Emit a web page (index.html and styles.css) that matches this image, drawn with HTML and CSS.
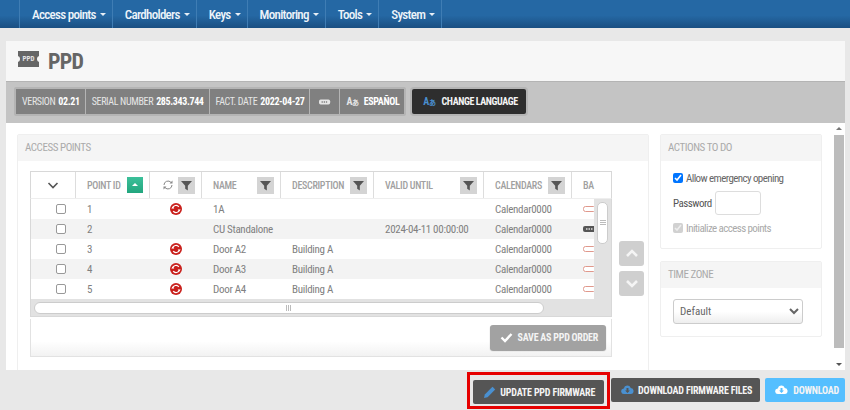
FILE: index.html
```html
<!DOCTYPE html>
<html lang="en">
<head>
  <meta charset="UTF-8">
  <title>PPD</title>
  <link rel="stylesheet" href="styles.css">
</head>
<body>
  <svg class="svg-defs" width="0" height="0">
    <symbol id="i-sync" viewBox="0 0 12 12">
      <circle cx="6" cy="6" r="6" fill="#c9201c"/>
      <path d="M2.600 5.200A3.500 3.500 0 0 1 8.800 3.800M9.400 6.800A3.500 3.500 0 0 1 3.200 8.200" fill="none" stroke="#fff" stroke-width="1.200"/>
      <path d="M1.300 5.600h3l-1.500-2zM10.700 6.400h-3l1.500 2z" fill="#fff"/>
    </symbol>
    <symbol id="i-filter" viewBox="0 0 10 10">
      <path d="M0 1h10L6.200 5.200V9.500L3.800 8V5.200z" fill="#555"/>
    </symbol>
    <symbol id="i-battery" viewBox="0 0 14 6">
      <rect x=".5" y=".5" width="12" height="5" rx="2" fill="#fff" stroke="#e0988c"/>
    </symbol>
    <symbol id="i-battery-dark" viewBox="0 0 14 6">
      <rect x="0" y="0" width="13" height="6" rx="2" fill="#555"/>
      <path d="M3 3h7" stroke="#ddd" stroke-width="1.500" stroke-dasharray="1.500 1"/>
    </symbol>
    <symbol id="i-battery-light" viewBox="0 0 14 6">
      <rect x="0" y="0" width="13" height="6" rx="2" fill="#e6e6e6"/>
      <path d="M3 3h7" stroke="#808080" stroke-width="1.500" stroke-dasharray="1.500 1"/>
    </symbol>
    <symbol id="i-cloud" viewBox="0 0 16 12">
      <path d="M4 11a3.500 3.500 0 0 1-.6-7A4.500 4.500 0 0 1 12 3.500 3.800 3.800 0 0 1 12.500 11z" fill="currentColor"/>
      <path d="M6.800 3.500h2.400v3h1.800L8 9.600 5 6.500h1.800z" fill="var(--arrow, #fff)"/>
    </symbol>
  </svg>

  <nav class="topbar">
    <a class="menu-item">Access points <span class="caret"></span></a>
    <a class="menu-item">Cardholders <span class="caret"></span></a>
    <a class="menu-item">Keys <span class="caret"></span></a>
    <a class="menu-item">Monitoring <span class="caret"></span></a>
    <a class="menu-item">Tools <span class="caret"></span></a>
    <a class="menu-item">System <span class="caret"></span></a>
  </nav>

  <main class="page">
    <header class="title-bar">
      <span class="ppd-logo"><span>PPD</span></span>
      <h1>PPD</h1>
    </header>

    <div class="info-bar">
      <div class="info-group">
        <span class="info-cell">VERSION <b>02.21</b></span>
        <span class="info-cell">SERIAL NUMBER <b>285.343.744</b></span>
        <span class="info-cell">FACT. DATE <b>2022-04-27</b></span>
        <span class="info-cell"><svg class="info-batt"><use href="#i-battery-light"/></svg></span>
        <span class="info-cell info-lang"><span class="lang-icon">A<small>あ</small></span> <b>ESPAÑOL</b></span>
      </div>
      <button class="lang-btn"><span class="lang-icon lang-blue">A<small>あ</small></span> CHANGE LANGUAGE</button>
    </div>

    <div class="content">
      <div class="content-inner">
        <section class="panel panel-points">
          <h2 class="panel-head">ACCESS POINTS</h2>
          <div class="points-body">
            <div class="grid-box">
              <div class="grid-head grid-cols">
                <div class="hcell hcell-check"><svg width="12" height="7" viewBox="0 0 12 7"><path d="M1.500 1L6 5.500 10.500 1" fill="none" stroke="#555" stroke-width="1.600"/></svg></div>
                <div class="hcell"><span>POINT ID</span><span class="sort-btn"></span></div>
                <div class="hcell hcell-sync">
                  <svg width="12" height="12" viewBox="0 0 12 12"><path d="M2 6a4 4 0 0 1 7-2.600M10 6a4 4 0 0 1-7 2.600" fill="none" stroke="#888"/><path d="M10.500 1.500v3h-3zM1.500 10.500v-3h3z" fill="#888"/></svg>
                  <span class="filter-btn"><svg><use href="#i-filter"/></svg></span>
                </div>
                <div class="hcell"><span>NAME</span><span class="filter-btn"><svg><use href="#i-filter"/></svg></span></div>
                <div class="hcell"><span>DESCRIPTION</span><span class="filter-btn"><svg><use href="#i-filter"/></svg></span></div>
                <div class="hcell"><span>VALID UNTIL</span><span class="filter-btn"><svg><use href="#i-filter"/></svg></span></div>
                <div class="hcell"><span>CALENDARS</span><span class="filter-btn"><svg><use href="#i-filter"/></svg></span></div>
                <div class="hcell hcell-last"><span>BA</span></div>
              </div>

              <div class="grid-rows">
                <div class="row grid-cols">
                  <div class="cell cell-check"><span class="tick"></span></div>
                  <div class="cell cell-id">1</div>
                  <div class="cell cell-sync"><svg><use href="#i-sync"/></svg></div>
                  <div class="cell">1A</div>
                  <div class="cell"></div>
                  <div class="cell"></div>
                  <div class="cell">Calendar0000</div>
                  <div class="cell cell-batt"><svg><use href="#i-battery"/></svg></div>
                </div>
                <div class="row grid-cols">
                  <div class="cell cell-check"><span class="tick"></span></div>
                  <div class="cell cell-id">2</div>
                  <div class="cell cell-sync"></div>
                  <div class="cell">CU Standalone</div>
                  <div class="cell"></div>
                  <div class="cell">2024-04-11 00:00:00</div>
                  <div class="cell">Calendar0000</div>
                  <div class="cell cell-batt"><svg><use href="#i-battery-dark"/></svg></div>
                </div>
                <div class="row grid-cols">
                  <div class="cell cell-check"><span class="tick"></span></div>
                  <div class="cell cell-id">3</div>
                  <div class="cell cell-sync"><svg><use href="#i-sync"/></svg></div>
                  <div class="cell">Door A2</div>
                  <div class="cell">Building A</div>
                  <div class="cell"></div>
                  <div class="cell">Calendar0000</div>
                  <div class="cell cell-batt"><svg><use href="#i-battery"/></svg></div>
                </div>
                <div class="row grid-cols">
                  <div class="cell cell-check"><span class="tick"></span></div>
                  <div class="cell cell-id">4</div>
                  <div class="cell cell-sync"><svg><use href="#i-sync"/></svg></div>
                  <div class="cell">Door A3</div>
                  <div class="cell">Building A</div>
                  <div class="cell"></div>
                  <div class="cell">Calendar0000</div>
                  <div class="cell cell-batt"><svg><use href="#i-battery"/></svg></div>
                </div>
                <div class="row grid-cols">
                  <div class="cell cell-check"><span class="tick"></span></div>
                  <div class="cell cell-id">5</div>
                  <div class="cell cell-sync"><svg><use href="#i-sync"/></svg></div>
                  <div class="cell">Door A4</div>
                  <div class="cell">Building A</div>
                  <div class="cell"></div>
                  <div class="cell">Calendar0000</div>
                  <div class="cell cell-batt"><svg><use href="#i-battery"/></svg></div>
                </div>
                <div class="vscroll"><span class="vthumb"></span></div>
              </div>

              <div class="hscroll"><span class="hthumb"></span></div>

              <div class="grid-foot">
                <button class="save-btn">
                  <svg width="13" height="11" viewBox="0 0 13 11"><path d="M1.500 5.500L5 9l6.500-7" fill="none" stroke="#fff" stroke-width="2.400"/></svg>
                  SAVE AS PPD ORDER
                </button>
              </div>
            </div>
            <div class="move-btns">
              <button class="move-btn"><svg width="14" height="9" viewBox="0 0 14 9"><path d="M2 7l5-5 5 5" fill="none" stroke="#f4f4f4" stroke-width="2.600"/></svg></button>
              <button class="move-btn"><svg width="14" height="9" viewBox="0 0 14 9"><path d="M2 2l5 5 5-5" fill="none" stroke="#f4f4f4" stroke-width="2.600"/></svg></button>
            </div>
          </div>
        </section>

        <aside class="side">
          <section class="panel">
            <h2 class="panel-head">ACTIONS TO DO</h2>
            <div class="actions-body">
              <label class="check-line"><input type="checkbox" checked> Allow emergency opening</label>
              <label class="pass-line">Password <input type="password" class="pass-input"></label>
              <label class="check-line check-off"><input type="checkbox" checked disabled> Initialize access points</label>
            </div>
          </section>
          <section class="panel">
            <h2 class="panel-head">TIME ZONE</h2>
            <div class="zone-body">
              <select class="zone-select"><option>Default</option></select>
            </div>
          </section>
        </aside>
      </div>

      <div class="page-scroll">
        <span class="arrow-up"></span>
        <span class="page-thumb"></span>
        <span class="arrow-down"></span>
      </div>
    </div>

    <footer class="actions">
      <span class="highlight">
        <button class="btn btn-dark btn-update">
          <svg width="14" height="14" viewBox="0 0 14 14"><path d="M1 13l.8-3.500L9.500 1.800l2.700 2.700-7.700 7.700z" fill="#4a90d0"/></svg>
          UPDATE PPD FIRMWARE
        </button>
      </span>
      <button class="btn btn-dark btn-files">
        <svg class="cloud cloud-blue"><use href="#i-cloud"/></svg>
        DOWNLOAD FIRMWARE FILES
      </button>
      <button class="btn btn-blue">
        <svg class="cloud cloud-white"><use href="#i-cloud"/></svg>
        DOWNLOAD
      </button>
    </footer>
  </main>
</body>
</html>
```

FILE: styles.css
```css
* { box-sizing: border-box; }
html, body { height: 100%; }
body {
  margin: 0;
  background-color: #e8e8e8;
  color: #777;
  font-family: Roboto, "Liberation Sans", sans-serif;
  font-stretch: 75%;
  font-size: 12px;
  overflow: hidden;
}
.svg-defs { position: absolute; }
h1, h2 { margin: 0; }
button { font-family: inherit; font-stretch: inherit; border: none; cursor: pointer; }
select { font-stretch: inherit; }

/* top menu */
.topbar {
  display: flex;
  height: 28px;
  padding-left: 19px;
  background: linear-gradient(#2568a4 0%, #2568a4 55%, #1a4f82 100%);
}
.menu-item {
  display: flex;
  align-items: center;
  gap: 4px;
  padding: 0 6px 0 12px;
  border-left: 1px solid #3f7db4;
  color: #eef4fa;
  font-size: 13px;
  font-weight: 500;
  letter-spacing: -.7px;
  white-space: nowrap;
}
.menu-item:last-child { border-right: 1px solid #3f7db4; }
.caret {
  border: 3px solid transparent;
  border-top-color: #e8eff6;
  border-bottom-width: 0;
}

.page { padding: 13px 5px 0 6px; }

/* title */
.title-bar {
  display: flex;
  align-items: center;
  gap: 9px;
  height: 40px;
  padding-left: 12px;
  background-color: #f7f7f7;
}
.title-bar h1 {
  color: #666;
  font-size: 22px;
  font-weight: 700;
  letter-spacing: -.8px;
}
.ppd-logo {
  position: relative;
  display: flex;
  align-items: center;
  justify-content: center;
  width: 21px;
  height: 16px;
  margin-top: -4px;
  background-color: #666;
}
.ppd-logo::before,
.ppd-logo::after {
  content: "";
  position: absolute;
  top: 5px;
  width: 6px;
  height: 6px;
  background-color: #f7f7f7;
  border-radius: 50%;
}
.ppd-logo::before { left: -4px; }
.ppd-logo::after { right: -4px; }
.ppd-logo span {
  color: #e4e4e4;
  font-size: 7px;
  font-weight: bold;
  line-height: 1;
}

/* grey info strip */
.info-bar {
  display: flex;
  align-items: flex-start;
  gap: 6px;
  height: 42px;
  padding: 7px 0 0 8px;
  background-color: #c4c4c4;
  border-top: 1px solid #b4b4b4;
}
.info-group {
  display: flex;
  gap: 1px;
  padding: 2px;
  margin-top: -2px;
  background-color: #b4b4b4;
  border-radius: 2px;
}
.info-cell {
  display: flex;
  align-items: center;
  gap: 3px;
  height: 25px;
  padding: 0 5px 0 6px;
  background-color: #808080;
  color: #e6e6e6;
  font-size: 10px;
  letter-spacing: -.35px;
  white-space: nowrap;
}
.info-cell b { color: #fff; }
.info-lang { gap: 5px; padding: 0 5px 0 6px; }
.info-batt { width: 12px; height: 6px; margin: 0 3px; }
.lang-icon { font-size: 10px; font-weight: bold; color: #e6e6e6; }
.lang-icon small { font-size: 7px; font-family: "Noto Sans CJK JP", sans-serif; }
.lang-blue { color: #4a90d0; }
.lang-btn {
  display: flex;
  align-items: center;
  gap: 6px;
  height: 25px;
  padding: 0 8px 0 11px;
  background-color: #2e2e2e;
  color: #f4f4f4;
  font-size: 10px;
  font-weight: bold;
  letter-spacing: -.4px;
  border-radius: 2px;
  box-shadow: 0 0 0 2px #b4b4b4;
}

/* white scrolling body */
.content {
  display: flex;
  height: 247px;
  background-color: #fff;
  overflow: hidden;
}
.content-inner {
  display: flex;
  flex: 1;
  gap: 11px;
  padding: 11px 0 0 11px;
}
.panel {
  background-color: #fff;
  border: 1px solid #efefef;
  border-radius: 2px;
}
.panel-head {
  height: 26px;
  padding: 0 7px;
  background-color: #f5f5f5;
  color: #aaa;
  font-size: 11px;
  font-weight: normal;
  letter-spacing: -.45px;
  line-height: 25px;
}
.panel-points { width: 632px; height: 240px; }
.points-body {
  display: flex;
  gap: 7px;
  padding: 10px 0 0 12px;
}

/* access points table */
.grid-box { width: 582px; }
.grid-cols {
  display: grid;
  grid-template-columns: 45px 74px 52px 79px 93px 110px 88px 39px;
}
.grid-head {
  height: 28px;
  border: 1px solid #d8d8d8;
  border-bottom: 1px solid #eee;
}
.hcell {
  display: flex;
  align-items: center;
  justify-content: space-between;
  padding: 0 6px 0 11px;
  border-right: 1px solid #ddd;
  color: #a0a0a0;
  font-size: 10px;
  font-weight: 500;
  letter-spacing: -.3px;
  white-space: nowrap;
}
.hcell-check { justify-content: center; padding: 0; }
.hcell-sync { padding: 0 6px 0 12px; }
.hcell-last { border-right: none; }
.sort-btn {
  position: relative;
  width: 16px;
  height: 16px;
  background: linear-gradient(#3cc09a, #22a67e);
}
.sort-btn::after {
  content: "";
  position: absolute;
  left: 5px;
  top: 6px;
  border: 3px solid transparent;
  border-bottom-color: #fff;
  border-top-width: 0;
}
.filter-btn {
  display: flex;
  align-items: center;
  justify-content: center;
  width: 17px;
  height: 17px;
  background-color: #d4d4d4;
}
.filter-btn svg { width: 11px; height: 11px; }
.grid-rows {
  position: relative;
  overflow: hidden;
  border-right: 1px solid #d8d8d8;
  border-left: 1px solid #d8d8d8;
}
.row { height: 20px; }
.row:nth-child(even) { background-color: #f3f3f3; }
.cell {
  display: flex;
  align-items: center;
  padding-left: 11px;
  color: #808080;
  font-size: 11px;
  letter-spacing: -.3px;
  white-space: nowrap;
}
.cell-check { justify-content: center; padding: 0; }
.cell-sync { justify-content: center; padding: 0; }
.cell-sync svg { width: 12px; height: 12px; }
.cell-batt svg { width: 14px; height: 6px; flex: none; }
.tick {
  width: 10px;
  height: 10px;
  margin-left: 15px;
  background-color: #fff;
  border: 1px solid #999;
  border-radius: 2px;
}
.vscroll {
  position: absolute;
  top: 0;
  right: 0;
  bottom: 0;
  width: 17px;
  padding: 3px 3px 0;
  background-color: #e2e2e2;
}
.vthumb {
  display: block;
  height: 42px;
  background: repeating-linear-gradient(#bbb 0 1px, transparent 1px 2px) center / 6px 6px no-repeat, #fff;
  border: 1px solid #ccc;
  border-radius: 5px;
}
.hscroll {
  height: 18px;
  padding: 3px 67px 3px 3px;
  background-color: #e2e2e2;
  border: 1px solid #d8d8d8;
  border-top: none;
}
.hthumb {
  display: block;
  height: 12px;
  background: repeating-linear-gradient(90deg, #bbb 0 1px, transparent 1px 2px) center / 6px 6px no-repeat, #fff;
  border: 1px solid #ccc;
  border-radius: 6px;
}
.grid-foot {
  display: flex;
  justify-content: flex-end;
  height: 38px;
  margin-top: 2px;
  padding: 6px 5px 0 0;
  background: linear-gradient(#fff 60%, #f2f2f2);
  border: 1px solid #e2e2e2;
  border-top: none;
}
.save-btn {
  display: flex;
  align-items: center;
  gap: 5px;
  height: 25px;
  padding: 0 8px 0 10px;
  background-color: #a2a2a2;
  color: #f4f4f4;
  font-size: 10px;
  font-weight: bold;
  letter-spacing: -.25px;
  border-radius: 3px;
  box-shadow: 0 1px 1px #999;
}
.move-btns {
  display: flex;
  flex-direction: column;
  gap: 5px;
  padding-top: 70px;
}
.move-btn {
  display: flex;
  align-items: center;
  justify-content: center;
  width: 25px;
  height: 25px;
  padding: 0;
  background-color: #cfcfcf;
  border-radius: 3px;
}

/* right column */
.side {
  display: flex;
  flex-direction: column;
  gap: 12px;
  width: 162px;
}
.actions-body { padding: 11px 12px 0; height: 87px; }
.check-line {
  display: flex;
  align-items: center;
  gap: 3px;
  height: 12px;
  color: #666;
  font-size: 11px;
  letter-spacing: -.6px;
  white-space: nowrap;
}
.check-line input { width: 10px; height: 10px; margin: 0; flex: none; }
.check-off { color: #aaa; }
.pass-line {
  display: flex;
  align-items: center;
  gap: 3px;
  margin: 7px 0;
  color: #555;
  font-size: 11px;
  letter-spacing: -.5px;
}
.pass-input {
  width: 46px;
  height: 24px;
  background-color: #fff;
  border: 1px solid #ddd;
  border-radius: 3px;
}
.zone-body { padding: 11px 12px 12px; }
.zone-select {
  width: 130px;
  height: 25px;
  padding-left: 2px;
  background: linear-gradient(#fff 50%, #eee);
  border: 1px solid #ccc;
  border-radius: 3px;
  color: #666;
  font-family: inherit;
  font-size: 11px;
}

/* outer scrollbar */
.page-scroll {
  display: flex;
  flex-direction: column;
  align-items: center;
  width: 12px;
  padding: 4px 0;
}
.arrow-up {
  margin-bottom: 5px;
  border: 3px solid transparent;
  border-bottom-color: #777;
  border-top-width: 0;
}
.arrow-down {
  margin-top: 15px;
  border: 3px solid transparent;
  border-top-color: #555;
  border-bottom-width: 0;
}
.page-thumb {
  width: 10px;
  flex: 1;
  background-color: #bcbcbc;
}

/* bottom buttons */
.actions {
  display: flex;
  justify-content: flex-end;
  align-items: flex-start;
  gap: 5px;
  height: 40px;
  padding-top: 2px;
}
.highlight {
  display: flex;
  margin-right: -4px;
  padding: 5px 3px 2px;
  border: 3px solid #e60000;
}
.btn {
  display: flex;
  align-items: center;
  height: 24px;
  margin-top: 6px;
  color: #f4f4f4;
  font-size: 10px;
  font-weight: bold;
  letter-spacing: -.2px;
  border-radius: 2px;
}
.btn-dark { background-color: #555; }
.btn-update { gap: 3px; margin-top: 0; padding: 0 9px 0 10px; }
.btn-files { gap: 4px; padding: 0 8px 0 10px; }
.btn-blue { gap: 5px; padding: 0 6px 0 10px; background-color: #55bfff; }
.cloud { width: 13px; height: 10px; }
.cloud-blue { color: #4a90d0; --arrow: #555; }
.cloud-white { color: #fff; --arrow: #55bfff; }
```
